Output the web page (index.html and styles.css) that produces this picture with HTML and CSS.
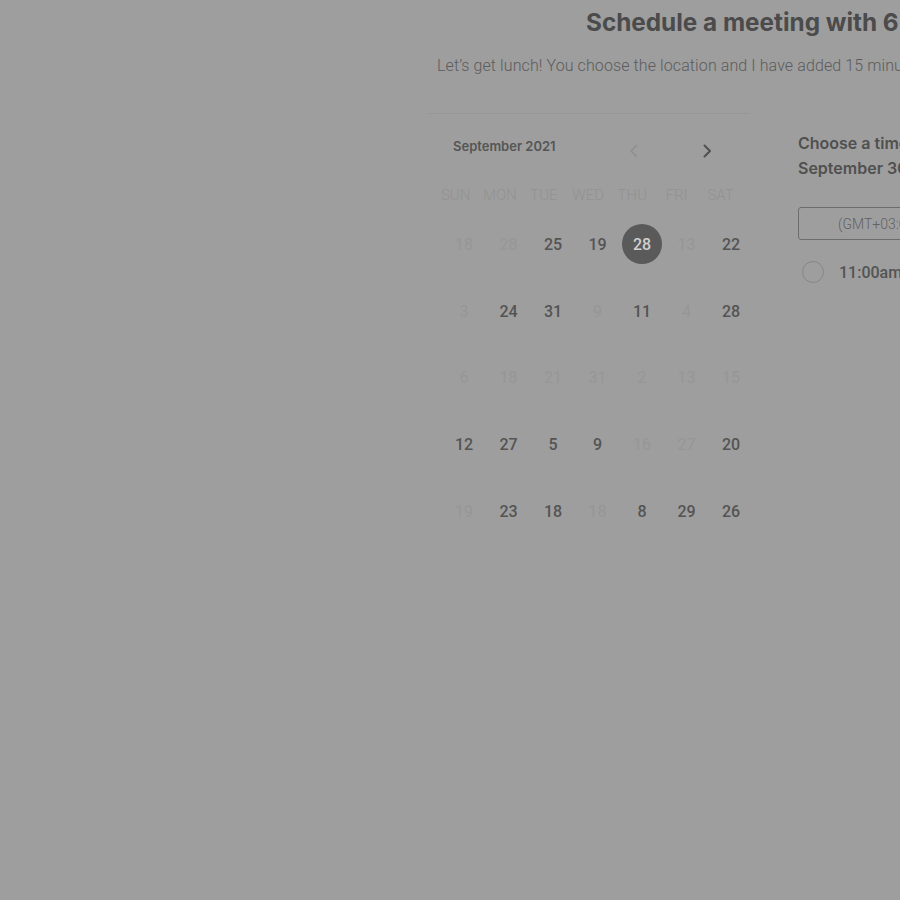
FILE: index.html
```html
<!DOCTYPE html>
<html lang="en">
<head>
<meta charset="utf-8">
<title>Schedule a meeting</title>
<link rel="stylesheet" href="styles.css">
</head>
<body>
<main class="page">
  <header class="intro">
    <h1 class="title">Schedule a meeting with 6 Pixels Agency</h1>
    <p class="lead">Let’s get lunch! You choose the location and I have added 15 minutes of travel time.</p>
  </header>
  <section class="booking">
    <div class="calendar">
      <div class="cal-head">
        <span class="month">September 2021</span>
        <div class="nav">
          <svg class="chev chev-off" width="16" height="16" viewBox="0 0 16 16"><path d="M10.5 2.5 5 8l5.5 5.5" fill="none" stroke="currentColor" stroke-width="1.6" stroke-linecap="round" stroke-linejoin="round"/></svg>
          <svg class="chev" width="16" height="16" viewBox="0 0 16 16"><path d="M5.5 2.5 11 8l-5.5 5.5" fill="none" stroke="currentColor" stroke-width="2" stroke-linecap="round" stroke-linejoin="round"/></svg>
        </div>
      </div>
      <div class="weekdays">
        <span>SUN</span><span>MON</span><span>TUE</span><span>WED</span><span>THU</span><span>FRI</span><span>SAT</span>
      </div>
      <div class="days">
        <span class="day off"><span class="num">18</span></span>
        <span class="day off"><span class="num">28</span></span>
        <span class="day"><span class="num">25</span></span>
        <span class="day"><span class="num">19</span></span>
        <span class="day sel"><span class="num">28</span></span>
        <span class="day off"><span class="num">13</span></span>
        <span class="day"><span class="num">22</span></span>

        <span class="day off"><span class="num">3</span></span>
        <span class="day"><span class="num">24</span></span>
        <span class="day"><span class="num">31</span></span>
        <span class="day off"><span class="num">9</span></span>
        <span class="day"><span class="num">11</span></span>
        <span class="day off"><span class="num">4</span></span>
        <span class="day"><span class="num">28</span></span>

        <span class="day off"><span class="num">6</span></span>
        <span class="day off"><span class="num">18</span></span>
        <span class="day off"><span class="num">21</span></span>
        <span class="day off"><span class="num">31</span></span>
        <span class="day off"><span class="num">2</span></span>
        <span class="day off"><span class="num">13</span></span>
        <span class="day off"><span class="num">15</span></span>

        <span class="day"><span class="num">12</span></span>
        <span class="day"><span class="num">27</span></span>
        <span class="day"><span class="num">5</span></span>
        <span class="day"><span class="num">9</span></span>
        <span class="day off"><span class="num">16</span></span>
        <span class="day off"><span class="num">27</span></span>
        <span class="day"><span class="num">20</span></span>

        <span class="day off"><span class="num">19</span></span>
        <span class="day"><span class="num">23</span></span>
        <span class="day"><span class="num">18</span></span>
        <span class="day off"><span class="num">18</span></span>
        <span class="day"><span class="num">8</span></span>
        <span class="day"><span class="num">29</span></span>
        <span class="day"><span class="num">26</span></span>
      </div>
    </div>
    <div class="times">
      <h2 class="times-title">Choose a time on<br>September 30, 2021</h2>
      <div class="tz">(GMT+03:00) Istanbul</div>
      <label class="slot"><span class="radio"></span><span class="slot-time">11:00am</span></label>
    </div>
  </section>
</main>
</body>
</html>
```

FILE: styles.css
```css
html, body {
  margin: 0;
  padding: 0;
}

body {
  background: #9e9e9e;
  width: 900px;
  height: 900px;
  overflow: hidden;
  font-family: "Roboto", "Liberation Sans", sans-serif;
}

.page {
  padding-left: 427px;
  width: 1100px;
}

.title {
  margin: 7px 0 0 159px;
  font-family: "Inter", "Liberation Sans", sans-serif;
  font-weight: 700;
  font-size: 24.3px;
  line-height: 30px;
  color: #4b4b4b;
  white-space: nowrap;
}

.lead {
  margin: 17px 0 0 10px;
  font-family: "Roboto", "Liberation Sans", sans-serif;
  font-weight: 300;
  font-size: 16px;
  line-height: 24px;
  letter-spacing: 0.1px;
  color: #5c5c5c;
  white-space: nowrap;
}

.booking {
  display: flex;
  margin-top: 35px;
}

.calendar {
  width: 323px;
  border-top: 1px solid #979797;
  padding-top: 24px;
  flex: none;
}

.cal-head {
  display: flex;
  justify-content: space-between;
  align-items: flex-start;
  width: 262px;
  margin-left: 26px;
}

.month {
  font-family: "Inter", "Liberation Sans", sans-serif;
  font-weight: 600;
  font-size: 13px;
  line-height: 16px;
  color: #555555;
}

.nav {
  display: flex;
  gap: 57px;
  margin-top: 5px;
}

.chev {
  display: block;
  color: #505050;
}

.chev-off {
  color: #8f8f8f;
}

.weekdays {
  display: grid;
  grid-template-columns: repeat(7, 44.17px);
  margin: 26px 0 0 6.6px;
  font-weight: 300;
  font-size: 15px;
  line-height: 20px;
  color: #929292;
  text-align: center;
}

.days {
  display: grid;
  grid-template-columns: repeat(7, 44.5px);
  grid-auto-rows: 66.7px;
  margin: 6px 0 0 14.75px;
}

.day {
  display: flex;
  align-items: center;
  justify-content: center;
}

.num {
  width: 40px;
  height: 40px;
  border-radius: 50%;
  display: flex;
  align-items: center;
  justify-content: center;
  font-weight: 500;
  font-size: 16px;
  color: #545454;
}

.off .num {
  font-weight: 400;
  color: #969696;
}

.sel .num {
  background: #5a5a5a;
  color: #cfcfcf;
}

.times {
  margin-left: 48px;
  padding-top: 18px;
  width: 320px;
  flex: none;
}

.times-title {
  margin: 0;
  font-family: "Inter", "Liberation Sans", sans-serif;
  font-weight: 600;
  font-size: 16px;
  line-height: 25px;
  color: #505050;
  white-space: nowrap;
}

.tz {
  box-sizing: border-box;
  margin-top: 26px;
  height: 33px;
  border: 1px solid #6c6c6c;
  border-radius: 3px;
  padding-left: 39px;
  display: flex;
  align-items: center;
  font-weight: 300;
  font-size: 14px;
  color: #626262;
}

.slot {
  display: flex;
  align-items: center;
  margin-top: 21px;
}

.radio {
  box-sizing: border-box;
  width: 22px;
  height: 22px;
  margin-left: 4px;
  border: 1.5px solid #868686;
  border-radius: 50%;
}

.slot-time {
  margin-left: 15px;
  font-weight: 500;
  font-size: 16px;
  color: #545454;
}
```
